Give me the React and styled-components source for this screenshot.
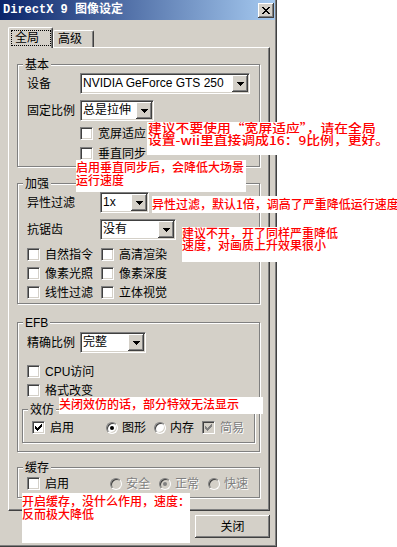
import React from "react";
import styled, { createGlobalStyle } from "styled-components";

const GlobalStyle = createGlobalStyle`
  body {
    margin: 0;
    background: #fff;
  }
`;

const FACE = "#d4d0c8";

const Window = styled.div`
  position: relative;
  box-sizing: border-box;
  width: 277px;
  height: 547px;
  padding-right: 1px;
  background: ${FACE};
  border-right: 1px solid #404040;
  border-bottom: 1px solid #404040;
  box-shadow: inset -1px -1px 0 #808080;
  font-family: "Liberation Sans", "Noto Sans CJK SC", sans-serif;
  font-size: 12px;
  color: #000;
`;

const TitleBar = styled.div`
  height: 20px;
  display: flex;
  align-items: center;
  justify-content: space-between;
  padding: 0 1px 0 3px;
  background: linear-gradient(to right, #0a246a, #a6caf0);
`;

const TitleText = styled.div`
  color: #fff;
  font-family: "Liberation Mono", "Noto Sans CJK SC", monospace;
  font-weight: bold;
  font-size: 12px;
  line-height: 14px;
  white-space: nowrap;
`;

const CloseButton = styled.div`
  box-sizing: border-box;
  width: 16px;
  height: 15px;
  display: flex;
  align-items: center;
  justify-content: center;
  background: ${FACE};
  box-shadow: inset -1px -1px 0 #404040, inset 1px 1px 0 #fff,
    inset -2px -2px 0 #808080;
`;

const Body = styled.div`
  padding: 7px 0 0 8px;
`;

const TabRow = styled.div`
  position: relative;
  z-index: 1;
  display: flex;
  align-items: flex-end;
  margin-bottom: -1px;
`;

const Tab = styled.div`
  box-sizing: border-box;
  width: ${(p) => p.$w}px;
  height: ${(p) => (p.$active ? 21 : 17)}px;
  margin-bottom: ${(p) => (p.$active ? 0 : 1)}px;
  padding: ${(p) => (p.$active ? "2px 0 0 2px" : "1px 0 0 4px")};
  background: ${FACE};
  border-top: 1px solid #fff;
  border-left: 1px solid #fff;
  border-right: 1px solid #404040;
  border-top-left-radius: 2px;
  border-top-right-radius: 2px;
  box-shadow: inset -1px 0 0 #808080;
  line-height: 14px;
`;

const FocusRing = styled.div`
  box-sizing: border-box;
  width: 40px;
  height: 16px;
  padding-left: 3px;
  border: 1px dotted #000;
  line-height: 14px;
`;

const Panel = styled.div`
  box-sizing: border-box;
  width: 262px;
  height: 464px;
  padding: 16px 9px 0 8px;
  border-top: 1px solid #fff;
  border-left: 1px solid #fff;
  border-right: 1px solid #404040;
  border-bottom: 1px solid #404040;
  box-shadow: inset -1px -1px 0 #808080;
`;

const Group = styled.div`
  box-sizing: border-box;
  width: ${(p) => p.$w || 243}px;
  margin-top: ${(p) => p.$mt || 0}px;
  margin-left: ${(p) => p.$ml || 0}px;
  padding: 0 0 ${(p) => p.$pb}px 9px;
  border: 1px solid #808080;
  box-shadow: inset 1px 1px 0 #fff, 1px 1px 0 #fff;
`;

const GroupTitle = styled.div`
  width: fit-content;
  height: 14px;
  margin: -7px 0 0 -4px;
  padding: 0 2px;
  line-height: 14px;
  background: ${FACE};
  white-space: nowrap;
`;

const Field = styled.div`
  display: flex;
  align-items: center;
  height: 21px;
  margin-top: ${(p) => p.$mt}px;
`;

const FieldLabel = styled.div`
  width: ${(p) => p.$w}px;
  flex: none;
  line-height: 14px;
  white-space: nowrap;
`;

const ComboBox = styled.div`
  box-sizing: border-box;
  width: ${(p) => p.$w}px;
  height: 21px;
  display: flex;
  align-items: stretch;
  padding: 1px;
  background: #fff;
  border: 1px solid;
  border-color: #808080 #fff #fff #808080;
  box-shadow: inset 1px 1px 0 #404040, inset -1px -1px 0 ${FACE};
`;

const ComboText = styled.div`
  flex: 1;
  padding-left: 1px;
  line-height: 17px;
  white-space: nowrap;
  overflow: hidden;
`;

const DropButton = styled.div`
  box-sizing: border-box;
  width: 16px;
  flex: none;
  display: flex;
  align-items: center;
  justify-content: center;
  background: ${FACE};
  box-shadow: inset -1px -1px 0 #404040, inset 1px 1px 0 #fff,
    inset -2px -2px 0 #808080;
`;

const OptionRow = styled.div`
  display: flex;
  align-items: center;
  height: 13px;
  margin-top: ${(p) => p.$mt}px;
  margin-left: ${(p) => p.$ml || 0}px;
`;

const OptionGrid = styled.div`
  display: grid;
  grid-template-columns: 74px 1fr;
  row-gap: 6px;
  margin-top: ${(p) => p.$mt}px;
`;

const Option = styled.div`
  display: flex;
  align-items: center;
  gap: ${(p) => p.$gap || 5}px;
  height: 13px;
  width: ${(p) => (p.$w ? `${p.$w}px` : "auto")};
  flex: none;
`;

const OptionText = styled.span`
  line-height: 14px;
  white-space: nowrap;
  color: ${(p) => (p.$disabled ? "#808080" : "#000")};
  text-shadow: ${(p) => (p.$disabled ? "1px 1px 0 #fff" : "none")};
`;

const CheckBox = styled.span`
  box-sizing: border-box;
  width: 13px;
  height: 13px;
  flex: none;
  display: flex;
  align-items: center;
  justify-content: center;
  border: 1px solid;
  border-color: #808080 #fff #fff #808080;
  box-shadow: inset 1px 1px 0 #404040, inset -1px -1px 0 ${FACE};
  background: ${(p) => (p.$disabled ? FACE : "#fff")};
`;

const RadioCircle = styled.span`
  box-sizing: border-box;
  width: 12px;
  height: 12px;
  flex: none;
  border-radius: 50%;
  display: flex;
  align-items: center;
  justify-content: center;
  border: 1px solid;
  border-color: #808080 #fff #fff #808080;
  box-shadow: inset 1px 1px 0 #404040, inset -1px -1px 0 ${FACE};
  background: ${(p) => (p.$disabled ? FACE : "#fff")};
  &::after {
    content: "";
    display: ${(p) => (p.$checked ? "block" : "none")};
    width: 4px;
    height: 4px;
    border-radius: 50%;
    background: ${(p) => (p.$disabled ? "#808080" : "#000")};
  }
`;

const ButtonRow = styled.div`
  width: 262px;
  display: flex;
  justify-content: flex-end;
  margin-top: 4px;
`;

const PushButton = styled.div`
  box-sizing: border-box;
  width: 75px;
  height: 23px;
  display: flex;
  align-items: center;
  justify-content: center;
  background: ${FACE};
  box-shadow: inset -1px -1px 0 #404040, inset 1px 1px 0 #fff,
    inset -2px -2px 0 #808080;
  line-height: 14px;
`;

const Note = styled.div`
  position: absolute;
  left: ${(p) => p.$x}px;
  top: ${(p) => p.$y}px;
  width: ${(p) => p.$w}px;
  height: ${(p) => p.$h}px;
  box-sizing: border-box;
  padding-top: ${(p) => p.$pt || 0}px;
  padding-left: ${(p) => p.$pl || 0}px;
  background: #fff;
  color: #ff0000;
  font-family: "Noto Sans CJK SC", sans-serif;
  font-weight: 500;
  font-size: 12px;
  line-height: ${(p) => p.$lh || 12}px;
  white-space: nowrap;
  overflow: hidden;
`;

const Stretched = styled.div`
  transform: scaleX(1.15);
  transform-origin: 0 0;
`;

const CloseGlyph = () => (
  <svg width="8" height="7" viewBox="0 0 8 7" shapeRendering="crispEdges">
    <path
      fill="#000"
      d="M0 0h2v1H0zM6 0h2v1H6zM1 1h2v1H1zM5 1h2v1H5zM2 2h4v1H2zM3 3h2v1H3zM2 4h4v1H2zM1 5h2v1H1zM5 5h2v1H5zM0 6h2v1H0zM6 6h2v1H6z"
    />
  </svg>
);

const Arrow = () => (
  <svg width="7" height="4" viewBox="0 0 7 4" shapeRendering="crispEdges">
    <path fill="#000" d="M0 0h7v1H0zM1 1h5v1H1zM2 2h3v1H2zM3 3h1v1H3z" />
  </svg>
);

const CheckMark = ({ color }) => (
  <svg width="7" height="7" viewBox="0 0 7 7" shapeRendering="crispEdges">
    <path
      fill={color}
      d="M6 0h1v1H6zM5 1h2v1H5zM0 2h1v1H0zM4 2h3v1H4zM0 3h2v1H0zM3 3h3v1H3zM0 4h5v1H0zM1 5h3v1H1zM2 6h1v1H2z"
    />
  </svg>
);

const Combo = ({ w, value }) => (
  <ComboBox $w={w}>
    <ComboText>{value}</ComboText>
    <DropButton>
      <Arrow />
    </DropButton>
  </ComboBox>
);

const Check = ({ label, checked, disabled, w }) => (
  <Option $w={w}>
    <CheckBox $disabled={disabled}>
      {checked && <CheckMark color={disabled ? "#808080" : "#000"} />}
    </CheckBox>
    <OptionText $disabled={disabled}>{label}</OptionText>
  </Option>
);

const Radio = ({ label, checked, disabled, w }) => (
  <Option $w={w} $gap={4}>
    <RadioCircle $checked={checked} $disabled={disabled} />
    <OptionText $disabled={disabled}>{label}</OptionText>
  </Option>
);

export default function App() {
  return (
    <>
      <GlobalStyle />
      <Window>
        <TitleBar>
          <TitleText>DirectX 9 图像设定</TitleText>
          <CloseButton>
            <CloseGlyph />
          </CloseButton>
        </TitleBar>
        <Body>
          <TabRow>
            <Tab $active $w={45}>
              <FocusRing>全局</FocusRing>
            </Tab>
            <Tab $w={41}>高级</Tab>
          </TabRow>
          <Panel>
            <Group $pb={6}>
              <GroupTitle>基本</GroupTitle>
              <Field $mt={1}>
                <FieldLabel $w={53}>设备</FieldLabel>
                <Combo w={170} value="NVIDIA GeForce GTS 250" />
              </Field>
              <Field $mt={6}>
                <FieldLabel $w={53}>固定比例</FieldLabel>
                <Combo w={74} value="总是拉伸" />
              </Field>
              <OptionRow $mt={6} $ml={53}>
                <Check label="宽屏适应" />
              </OptionRow>
              <OptionRow $mt={7} $ml={53}>
                <Check label="垂直同步" />
              </OptionRow>
            </Group>

            <Group $mt={16} $pb={4}>
              <GroupTitle>加强</GroupTitle>
              <Field $mt={1}>
                <FieldLabel $w={73}>异性过滤</FieldLabel>
                <Combo w={49} value="1x" />
              </Field>
              <Field $mt={6}>
                <FieldLabel $w={73}>抗锯齿</FieldLabel>
                <Combo w={76} value="没有" />
              </Field>
              <OptionGrid $mt={8}>
                <Check label="自然指令" />
                <Check label="高清渲染" />
                <Check label="像素光照" />
                <Check label="像素深度" />
                <Check label="线性过滤" />
                <Check label="立体视觉" />
              </OptionGrid>
            </Group>

            <Group $mt={18} $pb={8}>
              <GroupTitle>EFB</GroupTitle>
              <Field $mt={2}>
                <FieldLabel $w={53}>精确比例</FieldLabel>
                <Combo w={66} value="完整" />
              </Field>
              <OptionRow $mt={12}>
                <Check label="CPU访问" />
              </OptionRow>
              <OptionRow $mt={6}>
                <Check label="格式改变" />
              </OptionRow>
              <Group $w={233} $ml={-5} $mt={12} $pb={8}>
                <GroupTitle>效仿</GroupTitle>
                <OptionRow $mt={4}>
                  <Check label="启用" checked w={74} />
                  <Radio label="图形" checked w={48} />
                  <Radio label="内存" w={48} />
                  <Check label="简易" checked disabled />
                </OptionRow>
              </Group>
            </Group>

            <Group $mt={15} $pb={7}>
              <GroupTitle>缓存</GroupTitle>
              <OptionRow $mt={2}>
                <Check label="启用" w={83} />
                <Radio label="安全" disabled w={49} />
                <Radio label="正常" checked disabled w={49} />
                <Radio label="快速" disabled />
              </OptionRow>
            </Group>
          </Panel>
          <ButtonRow>
            <PushButton>关闭</PushButton>
          </ButtonRow>
        </Body>

        <Note $x={147} $y={122} $w={250} $h={33} $pl={1}>
          <Stretched>
            <div>建议不要使用“宽屏适应”，请在全局</div>
            <div>设置-wii里直接调成16：9比例，更好。</div>
          </Stretched>
        </Note>
        <Note $x={76} $y={160} $w={170} $h={32} $lh={13}>
          <div>启用垂直同步后，会降低大场景</div>
          <div>运行速度</div>
        </Note>
        <Note $x={152} $y={196} $w={245} $h={17} $pt={2}>
          异性过滤，默认1倍，调高了严重降低运行速度
        </Note>
        <Note $x={182} $y={227} $w={215} $h={35}>
          <div>建议不开，开了同样严重降低</div>
          <div>速度，对画质上升效果很小</div>
        </Note>
        <Note $x={59} $y={397} $w={204} $h={17} $pt={1}>
          关闭效仿的话，部分特效无法显示
        </Note>
        <Note $x={22} $y={493} $w={168} $h={50} $pt={1} $lh={13}>
          <div>开启缓存，没什么作用，速度：</div>
          <div>反而极大降低</div>
        </Note>
      </Window>
    </>
  );
}
